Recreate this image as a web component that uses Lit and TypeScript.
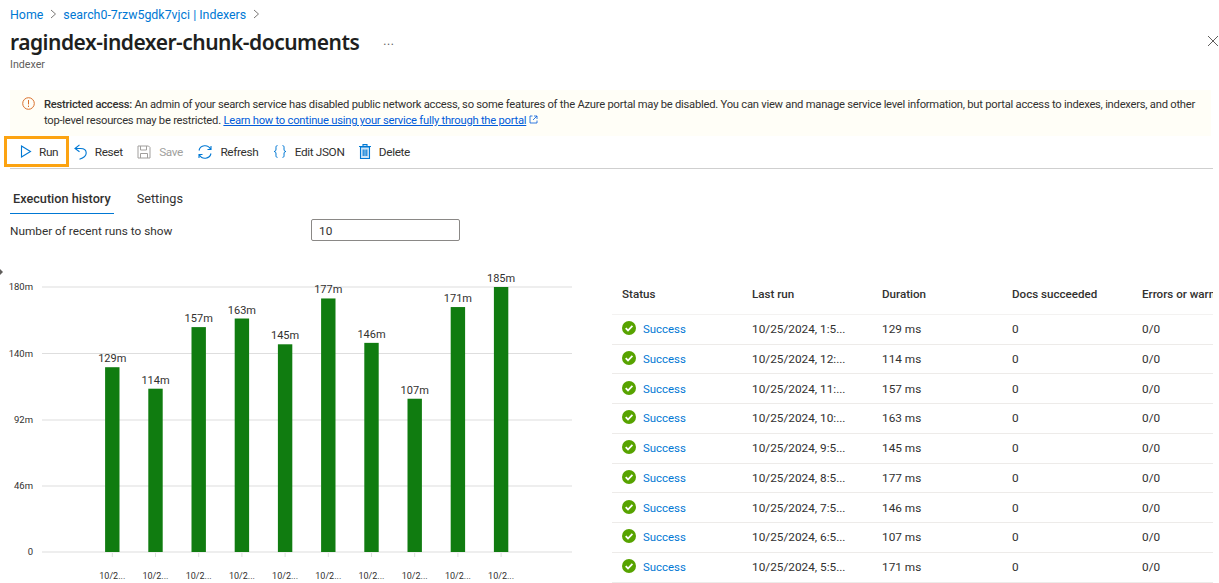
import { LitElement, html, css, svg } from 'lit'
import { customElement } from 'lit/decorators.js'

const RUNS = [
  { time: '10/25/2024, 1:5...', ms: 129 },
  { time: '10/25/2024, 12:...', ms: 114 },
  { time: '10/25/2024, 11:...', ms: 157 },
  { time: '10/25/2024, 10:...', ms: 163 },
  { time: '10/25/2024, 9:5...', ms: 145 },
  { time: '10/25/2024, 8:5...', ms: 177 },
  { time: '10/25/2024, 7:5...', ms: 146 },
  { time: '10/25/2024, 6:5...', ms: 107 },
  { time: '10/25/2024, 5:5...', ms: 171 },
]
const CHART_VALUES = [129, 114, 157, 163, 145, 177, 146, 107, 171, 185]
const GRID = [
  { y: 287, label: '180m' },
  { y: 353.5, label: '140m' },
  { y: 420, label: '92m' },
  { y: 486, label: '46m' },
  { y: 552, label: '0' },
]

@customElement('app-root')
export class AppRoot extends LitElement {
  static styles = css`
    :host {
      display: block;
      height: 583px;
      overflow: hidden;
      position: relative;
      background: #fff;
      font-family: Roboto, sans-serif;
      font-size: 12px;
      color: #323130;
    }
    a {
      color: #0078d4;
      text-decoration: none;
    }
    .crumbs {
      display: flex;
      align-items: center;
      height: 14px;
      padding: 7px 0 0 10px;
      gap: 6.5px;
      font-size: 12.4px;
    }
    .crumbs svg {
      display: block;
    }
    .head {
      display: flex;
      align-items: center;
      height: 26px;
      margin-top: 8px;
      padding-left: 10px;
      position: relative;
    }
    h1 {
      margin: 0;
      font-family: 'Noto Sans', sans-serif;
      font-size: 21px;
      font-weight: 600;
      line-height: 26px;
      color: #201f1e;
      letter-spacing: -0.5px;
    }
    .more {
      margin-left: 24px;
      margin-top: -3px;
      color: #605e5c;
      font-size: 12px;
      letter-spacing: 0.5px;
    }
    .close {
      position: absolute;
      right: 0;
      top: 6px;
      display: block;
    }
    .sub {
      padding-left: 10px;
      font-size: 10.7px;
      line-height: 14px;
      margin-top: 3px;
      color: #605e5c;
    }
    .banner {
      display: flex;
      margin: 18px 8px 0 10px;
      height: 46px;
      box-sizing: border-box;
      padding: 7px 12px 0 12px;
      gap: 9px;
      background: #fffef7;
      line-height: 16px;
      font-size: 11.2px;
      letter-spacing: -0.235px;
      color: #323130;
    }
    .banner svg {
      flex: none;
    }
    .banner a {
      text-decoration: underline;
      color: #015cda;
    }
    .banner b {
      font-weight: 500;
    }
    .toolbar {
      display: flex;
      align-items: center;
      margin: 0 6px 0 4px;
      height: 31px;
    }
    .tool {
      display: flex;
      align-items: center;
      gap: 8px;
      padding: 0 7.2px;
      font-size: 11.8px;
      letter-spacing: -0.35px;
      line-height: 16px;
    }
    .tool.run {
      box-sizing: border-box;
      width: 65px;
      height: 31px;
      border: 3px solid #fca311;
      padding: 0 0 0 13px;
      gap: 7px;
      margin-right: -2.4px;
    }
    .tool.off {
      color: #a19f9d;
    }
    .tool.refresh {
      gap: 7px;
    }
    .rule {
      height: 1px;
      margin: 1px 6px 0 10px;
      background: #cfcfcf;
    }
    .tabs {
      display: flex;
      gap: 20px;
      margin: 20px 0 0 10px;
      font-size: 12.7px;
    }
    .tab {
      padding: 0 3px;
      height: 25px;
      line-height: 20px;
      box-sizing: border-box;
    }
    .tab.on {
      font-weight: 500;
      border-bottom: 1.5px solid #0078d4;
    }
    .field {
      display: flex;
      align-items: center;
      height: 22px;
      margin: 5px 0 0 10px;
      font-size: 11.8px;
    }
    .field label {
      width: 301px;
      padding-top: 2px;
    }
    .input {
      box-sizing: border-box;
      width: 149px;
      height: 22px;
      border: 1px solid #8a8886;
      border-radius: 2px;
      padding: 1px 0 0 7px;
      line-height: 20px;
    }
    .chart {
      position: absolute;
      left: 0;
      top: 0;
      pointer-events: none;
    }
    .chart text {
      font-family: Roboto, sans-serif;
      fill: #323130;
    }
    .runs {
      position: absolute;
      left: 612px;
      top: 275px;
      width: 601px;
      overflow: hidden;
    }
    .row {
      display: grid;
      grid-template-columns: repeat(5, 130px);
      align-items: center;
      height: 29.75px;
      box-sizing: border-box;
      padding-left: 10px;
      border-bottom: 1px solid #edebe9;
      white-space: nowrap;
      font-size: 11.8px;
    }
    .row.top {
      height: 39.75px;
      border-bottom: 1px solid #f3f2f1;
      font-weight: 500;
      font-size: 11.6px;
    }
    .status {
      display: flex;
      align-items: center;
      gap: 7px;
    }
    .status svg {
      margin-top: -2px;
    }
    .status a {
      font-size: 11.4px;
    }
  `

  private chevron() {
    return html`<svg width="7" height="10" viewBox="0 0 7 10" fill="none" stroke="#797775" stroke-width="1"><path d="M1 1l4.5 4L1 9" /></svg>`
  }

  private chart() {
    const scale = (552 - 287) / 185
    return html`<svg class="chart" width="600" height="583" viewBox="0 0 600 583">
      <path d="M0 269l3 3-3 3z" fill="#605e5c" />
      ${GRID.map(
        (g) => svg`
          <rect x="42" y=${g.y - 0.5} width="530" height="1" fill="#dedede" />
          <text x="33" y=${g.y + 3} font-size="9.5" text-anchor="end">${g.label}</text>`
      )}
      ${CHART_VALUES.map((v, i) => {
        const cx = 112.3 + i * 43.2
        const top = 552 - v * scale
        return svg`
          <rect x=${cx - 7.2} y=${top} width="14.4" height=${552 - top} fill="#107c10" />
          <text x=${cx} y=${top - 5} font-size="11" text-anchor="middle">${v}m</text>
          <rect x=${cx - 0.5} y="553" width="1" height="4" fill="#dedede" />
          <text x=${cx} y="579" font-size="9" text-anchor="middle">10/2...</text>`
      })}
    </svg>`
  }

  render() {
    return html`
      <div class="crumbs">
        <a href="#">Home</a>${this.chevron()}<a href="#">search0-7rzw5gdk7vjci | Indexers</a>${this.chevron()}
      </div>
      <div class="head">
        <h1>ragindex-indexer-chunk-documents</h1>
        <span class="more">...</span>
        <svg class="close" width="12" height="12" viewBox="0 0 12 12" stroke="#605e5c" stroke-width="1"><path d="M1 1l10 10M11 1L1 11" /></svg>
      </div>
      <div class="sub">Indexer</div>
      <div class="banner">
        <svg width="13" height="13" viewBox="0 0 13 13" fill="none" stroke="#d9702c"><circle cx="6.5" cy="6.5" r="5.8" /><path d="M6.5 3v4.4M6.5 8.6v1.4" /></svg>
        <div>
          <b>Restricted access:</b> An admin of your search service has disabled public network access, so some features of the Azure portal may be disabled. You can view and manage service level information, but portal access to indexes, indexers, and other top-level resources may be restricted.
          <a href="#">Learn how to continue using your service fully through the portal</a>
          <svg width="9" height="9" viewBox="0 0 9 9" fill="none" stroke="#015cda" stroke-width="0.8"><path d="M3.5 1H1v7h7V5.5M5 1h3v3M8 1L4 5" /></svg>
        </div>
      </div>
      <div class="toolbar">
        <div class="tool run">
          <svg width="12" height="13" viewBox="0 0 12 13" fill="none" stroke="#0078d4" stroke-width="1.1"><path d="M1.5 1l9 5.5-9 5.5z" /></svg>Run
        </div>
        <div class="tool">
          <svg width="13" height="16" viewBox="0 0 13 16" fill="none" stroke="#0078d4" stroke-width="1.1"><path d="M5.500 .8L1 4.500l4.500 3.200M1 4.500h5.500c3.500 0 5.700 2 5.700 4.500 0 3-3 5-6.700 6.200" /></svg>Reset
        </div>
        <div class="tool off">
          <svg width="14" height="14" viewBox="0 0 14 14" fill="none" stroke="#a19f9d"><path d="M1 1h10.5L13 2.500V13H1zM3.500 1v4h6V1M3.500 13V8.500h7V13" /></svg>Save
        </div>
        <div class="tool refresh">
          <svg width="16" height="16" viewBox="0 0 16 16" fill="none" stroke="#0078d4" stroke-width="1.1"><path d="M2 6.500A6.200 6.200 0 0 1 13.500 5M14 2v3.500h-3.500M14 9.500A6.200 6.200 0 0 1 2.500 11M2 14v-3.500h3.500" /></svg>Refresh
        </div>
        <div class="tool">
          <svg width="14" height="13" viewBox="0 0 14 13" fill="none" stroke="#0078d4" stroke-width="1"><path d="M4.500 .6C2.500 .6 3 2.500 3 4c0 1.500-.5 2.500-2 2.500 1.500 0 2 1 2 2.500s-.5 3.400 1.500 3.400M9.500 .6c2 0 1.500 1.900 1.500 3.400 0 1.500.5 2.500 2 2.500-1.500 0-2 1-2 2.500s.5 3.400-1.500 3.400" /></svg>Edit JSON
        </div>
        <div class="tool">
          <svg width="12" height="15" viewBox="0 0 12 15" fill="none" stroke="#0078d4" stroke-width="1.1"><path d="M1.500 3h9v11.500h-9z" fill="#cfe4f6" /><path d="M0 2.500h12M4 2.500V.6h4v1.900M4.200 5.500v6.500M6 5.500v6.500M7.800 5.500v6.500" /></svg>Delete
        </div>
      </div>
      <div class="rule"></div>
      <div class="tabs">
        <div class="tab on">Execution history</div>
        <div class="tab">Settings</div>
      </div>
      <div class="field">
        <label>Number of recent runs to show</label>
        <div class="input">10</div>
      </div>
      ${this.chart()}
      <div class="runs">
        <div class="row top">
          <span>Status</span><span>Last run</span><span>Duration</span><span>Docs succeeded</span><span>Errors or warnings</span>
        </div>
        ${RUNS.map(
          (r) => html`<div class="row">
            <span class="status">
              <svg width="14" height="14" viewBox="0 0 14 14"><circle cx="7" cy="7" r="7" fill="#57a300" /><path d="M3.700 7.200l2.300 2.300 4.400-4.700" fill="none" stroke="#fff" stroke-width="1.800" /></svg>
              <a href="#">Success</a>
            </span>
            <span>${r.time}</span><span>${r.ms} ms</span><span>0</span><span>0/0</span>
          </div>`
        )}
      </div>
    `
  }
}
